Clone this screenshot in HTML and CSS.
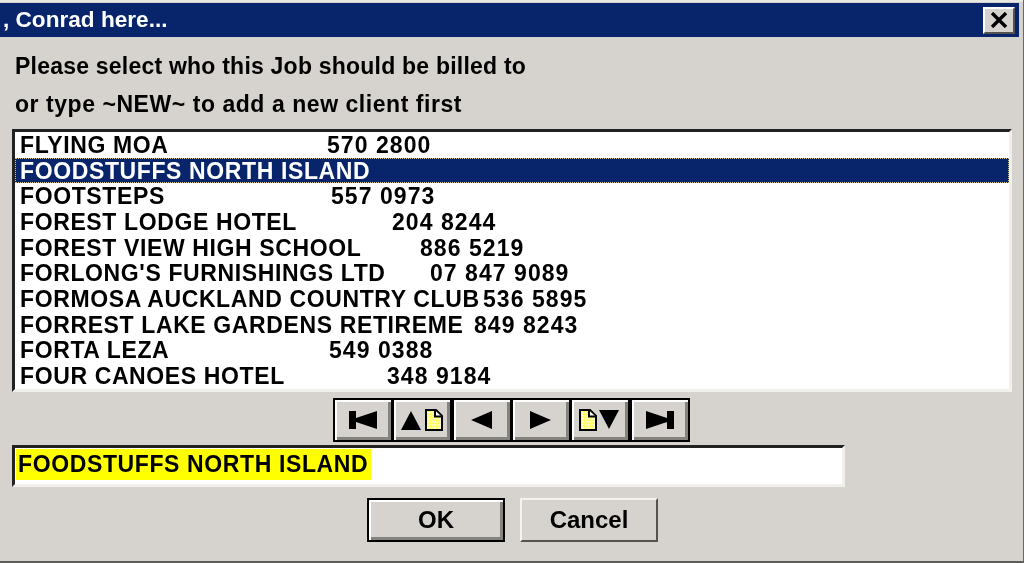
FILE: index.html
```html
<!DOCTYPE html>
<html lang="en">
<head>
    <meta charset="UTF-8">
    <title>Conrad here</title>
    <link rel="stylesheet" href="styles.css">
</head>
<body>
    <div class="window">
        <div class="titlebar">
            <span class="title">, Conrad here...</span>
            <button class="close-btn" type="button" aria-label="Close">
                <svg width="20" height="16" viewBox="0 0 20 16"><path d="M3 1 L17 15 M17 1 L3 15" stroke="#000" stroke-width="3.4" fill="none"/></svg>
            </button>
        </div>

        <div class="content">
            <p class="prompt">Please select who this Job should be billed to</p>
            <p class="prompt prompt-wide">or type ~NEW~ to add a new client first</p>

            <div class="list sunken">
                <div class="row"><span class="name" style="width:307px">FLYING MOA</span><span class="phone">570 2800</span></div>
                <div class="row selected"><span>FOODSTUFFS NORTH ISLAND</span></div>
                <div class="row"><span class="name" style="width:311px">FOOTSTEPS</span><span class="phone">557 0973</span></div>
                <div class="row"><span class="name" style="width:372px">FOREST LODGE HOTEL</span><span class="phone">204 8244</span></div>
                <div class="row"><span class="name" style="width:400px">FOREST VIEW HIGH SCHOOL</span><span class="phone">886 5219</span></div>
                <div class="row"><span class="name" style="width:410px">FORLONG'S FURNISHINGS LTD</span><span class="phone">07 847 9089</span></div>
                <div class="row"><span class="name" style="width:463px">FORMOSA AUCKLAND COUNTRY CLUB</span><span class="phone">536 5895</span></div>
                <div class="row"><span class="name" style="width:454px">FORREST LAKE GARDENS RETIREME</span><span class="phone">849 8243</span></div>
                <div class="row"><span class="name" style="width:309px">FORTA LEZA</span><span class="phone">549 0388</span></div>
                <div class="row"><span class="name" style="width:367px">FOUR CANOES HOTEL</span><span class="phone">348 9184</span></div>
            </div>

            <div class="toolbar">
                <button class="tool" type="button" aria-label="First">
                    <svg width="30" height="20" viewBox="0 0 30 20"><path d="M1 1h7v18H1zM8 8L29 1v18L8 12z"/></svg>
                </button>
                <button class="tool" type="button" aria-label="Previous page">
                    <svg width="42" height="22" viewBox="0 0 42 22">
                        <defs><pattern id="dither-a" width="3" height="3" patternUnits="userSpaceOnUse"><rect width="3" height="3" fill="#ffff66"/><rect width="1.500" height="1.500" fill="#fff"/></pattern></defs>
                        <path d="M0 21L10 2l10 19z"/><path d="M25 1h10l6 6v14H25z" fill="url(#dither-a)" stroke="#000" stroke-width="2"/><path d="M34 1.500v6h6.500" fill="#fff" stroke="#000" stroke-width="2"/>
                    </svg>
                </button>
                <button class="tool" type="button" aria-label="Previous">
                    <svg width="22" height="20" viewBox="0 0 22 20"><path d="M0 10L21 1v18z"/></svg>
                </button>
                <button class="tool" type="button" aria-label="Next">
                    <svg width="22" height="20" viewBox="0 0 22 20"><path d="M21 10L0 1v18z"/></svg>
                </button>
                <button class="tool" type="button" aria-label="Next page">
                    <svg width="42" height="22" viewBox="0 0 42 22">
                        <defs><pattern id="dither-b" width="3" height="3" patternUnits="userSpaceOnUse"><rect width="3" height="3" fill="#ffff66"/><rect width="1.500" height="1.500" fill="#fff"/></pattern></defs>
                        <path d="M1 1h10l6 6v14H1z" fill="url(#dither-b)" stroke="#000" stroke-width="2"/><path d="M10 1.500v6h6.500" fill="#fff" stroke="#000" stroke-width="2"/><path d="M20 1h20L30 20z"/>
                    </svg>
                </button>
                <button class="tool" type="button" aria-label="Last">
                    <svg width="30" height="20" viewBox="0 0 30 20"><path d="M22 1h7v18h-7zM22 8L1 1v18l21-7z"/></svg>
                </button>
            </div>

            <div class="search sunken">
                <span class="search-text">FOODSTUFFS NORTH ISLAND</span>
            </div>

            <div class="actions">
                <button class="btn default" type="button">OK</button>
                <button class="btn" type="button">Cancel</button>
            </div>
        </div>
    </div>
</body>
</html>
```

FILE: styles.css
```css
html, body { margin: 0; padding: 0; }
body { width: 1024px; height: 563px; overflow: hidden; background: #d6d3ce; font-family: "Liberation Sans", Arial, sans-serif; font-weight: bold; color: #000; }
p { margin: 0; }
button { font: inherit; color: inherit; padding: 0; margin: 0; cursor: pointer; }

.window { box-sizing: border-box; width: 1024px; height: 563px; display: flex; flex-direction: column; padding: 3px 4px 2px 0; border-right: 1px solid #6a6864; border-bottom: 2px solid #5f5d5a; background: #d6d3ce; box-shadow: inset 0 2px 0 #e9e7e3; filter: blur(0.45px); }

.titlebar { height: 34px; flex: none; display: flex; align-items: center; justify-content: space-between; background: #08246b; color: #fff; padding: 0 4px 0 3px; }
.title { font-size: 22.6px; }
.close-btn { width: 32px; height: 27px; display: flex; align-items: center; justify-content: center; background: #d6d3ce; border: 2px solid; border-color: #fff #55534f #55534f #fff; }

.content { flex: 1; padding: 0 0 0 12px; display: flex; flex-direction: column; }
.prompt { font-size: 23px; line-height: 38px; padding-left: 3px; letter-spacing: 0.22px; }
.prompt:first-child { margin-top: 10px; }
.prompt-wide { letter-spacing: 0.55px; }

.sunken { box-sizing: border-box; background: #fff; border: 3px solid; border-color: #222 #f2f0ed #f2f0ed #222; }

.list { width: 1000px; height: 263px; margin-top: 6px; overflow: hidden; }
.row { height: 25.7px; display: flex; align-items: center; padding: 1px 0 0 5px; box-sizing: border-box; font-size: 23px; white-space: pre; letter-spacing: 0.62px; }
.name { flex: none; }
.phone { letter-spacing: 1.05px; }
.selected { background: #08246b; color: #fff; outline: 1px dotted #d6c98a; outline-offset: -1px; }

.toolbar { display: flex; margin: 6px 0 0 321px; }
.tool { box-sizing: border-box; width: 60px; height: 44px; margin-right: -0.66px; display: flex; align-items: center; justify-content: center; background: #d6d3ce; border: 2px solid #000; box-shadow: inset 2px 2px 0 #fff, inset -3px -3px 0 #85837e; }

.search { width: 833px; height: 42px; margin-top: 3px; padding: 1px 0 0 1px; display: flex; align-items: flex-start; }
.search-text { background: #ffff00; height: 31px; line-height: 31px; padding: 0 3px 0 2px; font-size: 23px; letter-spacing: 0.62px; }

.actions { display: flex; gap: 15px; margin: 11px 0 0 355px; }
.btn { box-sizing: border-box; width: 138px; height: 44px; font-size: 24px; background: #d6d3ce; border: 2px solid; border-color: #f4f3f0 #55534f #55534f #f4f3f0; }
.default { border-color: #000; box-shadow: inset 2px 2px 0 #fff, inset -3px -3px 0 #85837e; }
```
